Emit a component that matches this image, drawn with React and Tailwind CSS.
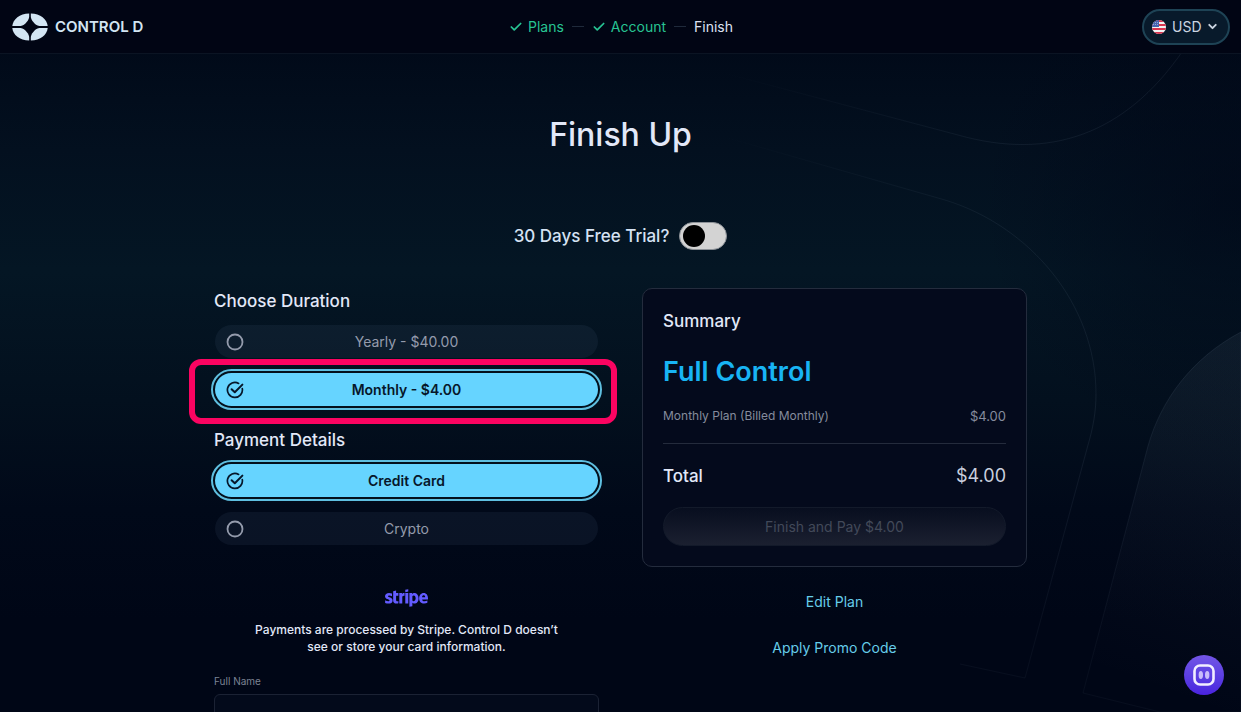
import { useState } from "react";
import { Check, ChevronDown } from "lucide-react";
import { FaStripe } from "react-icons/fa6";

function Logo() {
  return (
    <a href="#home" className="flex items-center gap-[7px] text-[#d3e5f3]">
      <svg width="36" height="28" viewBox="0 0 36 28" fill="currentColor" aria-hidden="true">
        <path d="M17.2 0.5V3.6C17.2 6.6 13.4 12.4 8.6 13.1H0.3C0.9 6.4 7.6 0.7 17.2 0.5Z" />
        <path d="M18.8 0.5V3.6C18.8 6.6 22.6 12.4 27.4 13.1H35.7C35.1 6.4 28.4 0.7 18.8 0.5Z" />
        <path d="M17.2 27.5V24.4C17.2 21.4 13.4 15.6 8.6 14.9H0.3C0.9 21.6 7.6 27.3 17.2 27.5Z" />
        <path d="M18.8 27.5V24.4C18.8 21.4 22.6 15.6 27.4 14.9H35.7C35.1 21.6 28.4 27.3 18.8 27.5Z" />
      </svg>
      <span className="text-[15px] leading-5 font-semibold">CONTROL D</span>
    </a>
  );
}

function Steps() {
  return (
    <ol className="flex items-center gap-2 text-sm leading-5">
      {["Plans", "Account"].map((step) => (
        <li key={step} className="flex items-center gap-2 text-[#27c493]">
          <span className="flex items-center gap-[5px]">
            <Check size={14} strokeWidth={3} aria-hidden="true" />
            {step}
          </span>
          <span className="h-px w-3 bg-[#1f2a3b]" />
        </li>
      ))}
      <li className="text-[#dde2f2]" aria-current="step">Finish</li>
    </ol>
  );
}

function Flag() {
  return (
    <svg width="14" height="14" viewBox="0 0 14 14" aria-hidden="true" className="shrink-0">
      <clipPath id="flag-disc">
        <circle cx="7" cy="7" r="7" />
      </clipPath>
      <g clipPath="url(#flag-disc)">
        <rect width="14" height="14" fill="#f3f1f3" />
        <path d="M0 1H14M0 5H14M0 9H14M0 13H14" stroke="#d8344f" strokeWidth="2" />
        <rect width="7" height="7" fill="#4663b0" />
        <path d="M1 2.5H6M1 4.5H6" stroke="#a9b8de" strokeWidth="0.8" strokeDasharray="1 1" />
      </g>
    </svg>
  );
}

function Currency() {
  return (
    <label className="relative flex h-9 items-center rounded-full border-2 border-[#1e4355] bg-[#081a2b] pl-2 text-[#cbd5e1]">
      <Flag />
      <select
        aria-label="Currency"
        className="h-6 appearance-none bg-transparent pr-[26px] pl-1.5 text-sm leading-6 outline-none"
        defaultValue="USD"
      >
        <option>USD</option>
        <option>CAD</option>
      </select>
      <ChevronDown size={13} strokeWidth={3.5} aria-hidden="true" className="pointer-events-none absolute right-[9px]" />
    </label>
  );
}

function Option({ name, label, checked, onSelect, highlighted }) {
  return (
    <div className="relative">
      <label
        className={
          checked
            ? "relative flex h-[33px] cursor-pointer items-center rounded-full bg-[#66d4ff] px-[11px] text-sm font-semibold text-[#06172a] ring-2 ring-[#03101d] outline-2 outline-offset-2 outline-[#5fbfe0]"
            : "relative flex h-[33px] cursor-pointer items-center rounded-full bg-[#94a3d0]/7 px-[11px] text-sm text-[#949bac]"
        }
      >
        <input type="radio" name={name} checked={checked} onChange={onSelect} className="sr-only" />
        <svg width="18" height="18" viewBox="0 0 18 18" fill="none" stroke="currentColor" aria-hidden="true" className="shrink-0">
          {checked ? (
            <>
              <path d="M16.3 7.6A7.5 7.5 0 1 1 12.6 2.4" strokeWidth="1.7" strokeLinecap="round" />
              <path d="M5.6 8.2L8.8 11.3L16.4 3.6" strokeWidth="2" strokeLinecap="round" strokeLinejoin="round" />
            </>
          ) : (
            <circle cx="9" cy="9" r="7.5" strokeWidth="1.8" />
          )}
        </svg>
        <span className="flex-1 pr-[18px] text-center">{label}</span>
      </label>
      {highlighted && (
        <div className="pointer-events-none absolute -top-3.5 -right-[19px] -bottom-[18px] -left-[26px] rounded-xl border-6 border-[#fb0461]" />
      )}
    </div>
  );
}

function Background() {
  return (
    <svg
      width="541"
      height="712"
      viewBox="700 0 541 712"
      fill="none"
      aria-hidden="true"
      className="pointer-events-none absolute top-0 right-0"
    >
      <defs>
        <linearGradient id="edge" gradientUnits="userSpaceOnUse" x1="720" y1="0" x2="1000" y2="0">
          <stop stopColor="#8aa0b8" stopOpacity="0" />
          <stop offset="1" stopColor="#8aa0b8" stopOpacity="0.09" />
        </linearGradient>
        <linearGradient id="edge-down" gradientUnits="userSpaceOnUse" x1="0" y1="380" x2="0" y2="690">
          <stop stopColor="#8aa0b8" stopOpacity="0.11" />
          <stop offset="1" stopColor="#8aa0b8" stopOpacity="0.05" />
        </linearGradient>
        <linearGradient id="lobe" gradientUnits="userSpaceOnUse" x1="1241" y1="350" x2="1120" y2="680">
          <stop stopColor="#8aa0b8" stopOpacity="0.08" />
          <stop offset="1" stopColor="#8aa0b8" stopOpacity="0" />
        </linearGradient>
        <radialGradient id="shade" gradientUnits="userSpaceOnUse" cx="1241" cy="200" r="260">
          <stop stopColor="#010818" stopOpacity="0.7" />
          <stop offset="1" stopColor="#010818" stopOpacity="0" />
        </radialGradient>
      </defs>
      <rect x="700" width="541" height="712" fill="url(#shade)" />
      <path d="M720 72L958 135C1050 161 1125 134 1182 52" stroke="url(#edge)" />
      <path d="M700 130L945 200C1030 226 1096 304 1096 394" stroke="url(#edge)" />
      <path d="M1096 394C1096 412 1093 428 1088 445L1025 678L960 664" stroke="url(#edge-down)" />
      <path d="M1241 332C1192 358 1161 400 1148 446L1083 693L1160 712H1241Z" fill="url(#lobe)" stroke="url(#edge-down)" />
    </svg>
  );
}

export default function App() {
  const [duration, setDuration] = useState("Monthly - $4.00");
  const [payment, setPayment] = useState("Credit Card");

  return (
    <div className="relative h-screen overflow-x-hidden overflow-y-auto bg-[#010616] bg-[linear-gradient(to_bottom,#010a19_50px,#03101f_150px,#041624_270px,#03101e_400px,#010919_510px,#000616_620px)] font-[Inter,sans-serif] text-[#e2e8f8] [scrollbar-width:none]">
      <Background />
      <header className="relative grid h-[54px] grid-cols-[1fr_auto_1fr] items-center border-b border-[#0b1423] bg-[#010514] pr-[11px] pl-3">
        <Logo />
        <Steps />
        <div className="flex justify-end">
          <Currency />
        </div>
      </header>

      <main className="relative mx-auto max-w-[813px]">
        <h1 className="pt-[61px] text-center text-[32px] leading-10 font-medium">Finish Up</h1>
        <label className="mt-[67px] flex items-center justify-center gap-2.5 text-[17px] leading-7 font-medium text-[#d5e2f3]">
          30 Days Free Trial?
          <input
            type="checkbox"
            role="switch"
            className="flex h-7 w-12 appearance-none items-center rounded-full border border-[#8c9197] bg-[#d3d3d3] px-[3px] before:size-[22px] before:rounded-full before:bg-black checked:justify-end"
          />
        </label>

        <div className="mt-[38px] grid grid-cols-2 gap-[43px]">
          <section>
            <fieldset>
              <legend className="h-[37px] text-[17px] leading-[26px] font-medium">Choose Duration</legend>
              <div className="grid gap-[15px] px-px">
                {["Yearly - $40.00", "Monthly - $4.00"].map((item) => (
                  <Option
                    key={item}
                    name="duration"
                    label={item}
                    checked={duration === item}
                    onSelect={() => setDuration(item)}
                    highlighted={item === "Monthly - $4.00"}
                  />
                ))}
              </div>
            </fieldset>
            <fieldset className="mt-[21px]">
              <legend className="h-[37px] text-[17px] leading-[26px] font-medium">Payment Details</legend>
              <div className="grid gap-[15px] px-px">
                {["Credit Card", "Crypto"].map((item) => (
                  <Option
                    key={item}
                    name="payment"
                    label={item}
                    checked={payment === item}
                    onSelect={() => setPayment(item)}
                  />
                ))}
              </div>
            </fieldset>
            <div className="mt-8 flex flex-col items-center">
              <FaStripe size={43} className="h-[42px] text-[#635bff]" aria-label="Stripe" />
              <p className="mt-0.5 max-w-[320px] text-center text-xs leading-[17px] font-medium">
                Payments are processed by Stripe. Control D doesn’t see or store your card information.
              </p>
            </div>
            <label htmlFor="full-name" className="mt-[18px] block text-[10px] leading-4 text-[#7c8394]">
              Full Name
            </label>
            <input
              id="full-name"
              className="mt-[5px] mb-8 block h-10 w-full rounded-md border border-[#1b2234] bg-[#030a1b] px-3 text-sm outline-none"
            />
          </section>

          <aside>
            <div className="rounded-[10px] border border-[#242c3d] bg-[#040a1c] p-5">
              <h2 className="text-[17px] leading-6 font-medium">Summary</h2>
              <p className="mt-[21px] text-[27px] leading-9 font-semibold text-[#18b4f4]">Full Control</p>
              <div className="mt-4 flex justify-between text-xs leading-5 text-[#858c9d]">
                <span>Monthly Plan (Billed Monthly)</span>
                <span className="text-[13px]">$4.00</span>
              </div>
              <hr className="mt-[17px] border-[#242b3c]" />
              <div className="mt-5 flex items-center justify-between text-[17px] leading-6">
                <span className="font-medium">Total</span>
                <span className="text-lg leading-6 text-[#c9cfdf]">$4.00</span>
              </div>
              <button
                type="button"
                disabled
                className="mt-[19px] h-[39px] w-full rounded-full border border-[#131a2a] bg-linear-to-b from-[#080e1f] to-[#1b2030] text-sm text-[#424959]"
              >
                Finish and Pay $4.00
              </button>
            </div>
            <div className="mt-[25px] flex flex-col items-center gap-[26px] text-sm leading-5 text-[#66cdea]">
              <a href="#plans">Edit Plan</a>
              <button type="button">Apply Promo Code</button>
            </div>
          </aside>
        </div>
      </main>

      <button
        type="button"
        aria-label="Open chat"
        className="fixed right-[17px] bottom-[17px] flex size-10 items-center justify-center rounded-full bg-linear-to-b from-[#7355e6] to-[#4a22df]"
      >
        <svg width="22" height="22" viewBox="0 0 22 22" fill="none" aria-hidden="true">
          <rect x="1.5" y="1.5" width="19" height="19" rx="5.5" stroke="#f2eeff" strokeWidth="2.6" />
          <ellipse cx="7.8" cy="11" rx="2.2" ry="4" fill="#c9bcfa" />
          <ellipse cx="14.2" cy="11" rx="2.2" ry="4" fill="#c9bcfa" />
        </svg>
      </button>
    </div>
  );
}
